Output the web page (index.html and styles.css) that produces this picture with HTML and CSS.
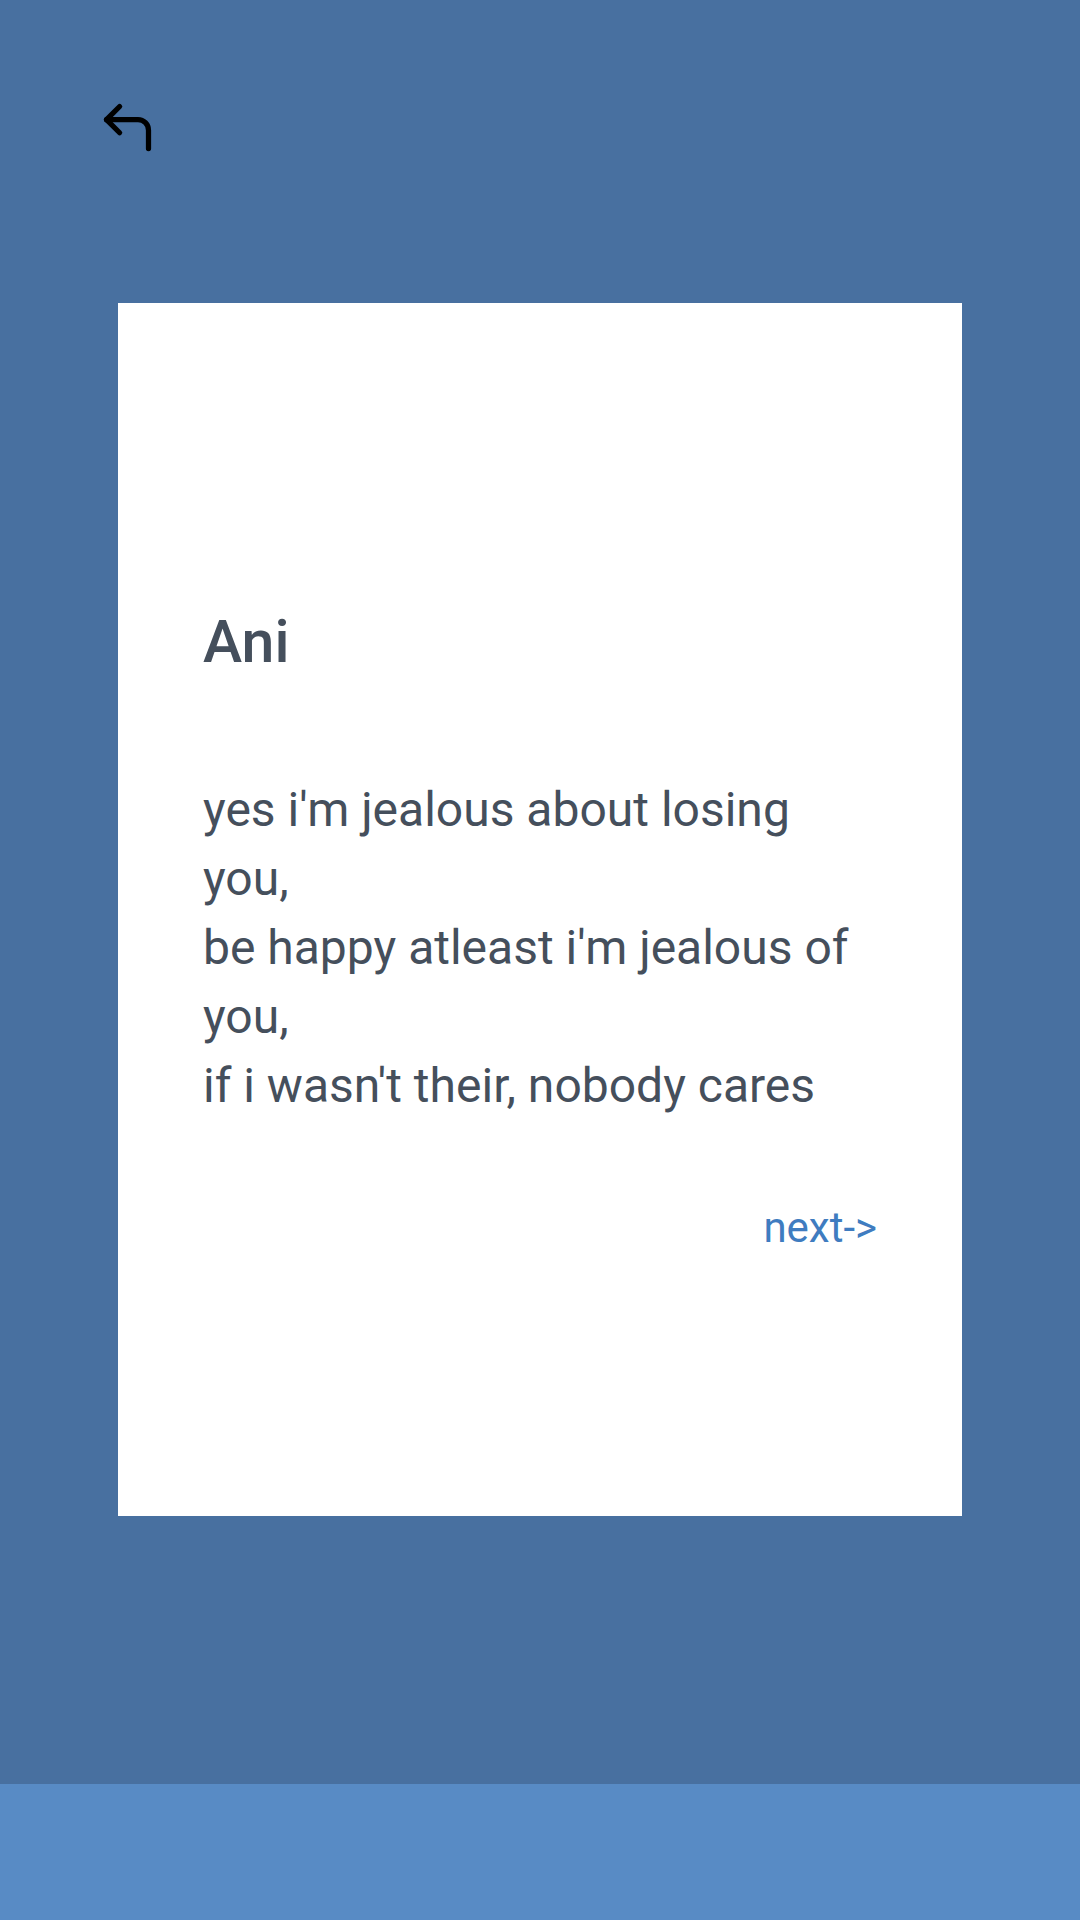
FILE: index.html
```html
<!DOCTYPE html>
<html>
<head>
<meta charset="utf-8">
<link rel="stylesheet" href="styles.css">
</head>
<body>
<div class="screen">
  <header class="topbar">
    <svg class="back" viewBox="0 0 24 24" width="63" height="63" fill="none" stroke="#000" stroke-width="2" stroke-linecap="round" stroke-linejoin="round">
      <polyline points="9 14 4 9 9 4"></polyline>
      <path d="M20 20v-7a4 4 0 0 0-4-4H4"></path>
    </svg>
  </header>
  <main class="content">
    <section class="card">
      <h1 class="title">Ani</h1>
      <p class="poem">yes i'm jealous about losing you,<br>be happy atleast i'm jealous of you,<br>if i wasn't their, nobody cares</p>
      <div class="actions"><a class="next" href="#">next-&gt;</a></div>
    </section>
  </main>
  <footer class="bottombar"></footer>
</div>
</body>
</html>
```

FILE: styles.css
```css
html, body {
  margin: 0;
  padding: 0;
}
body {
  font-family: Roboto, "Noto Sans", sans-serif;
  background: #4870a0;
}
.screen {
  width: 1080px;
  height: 1920px;
  display: flex;
  flex-direction: column;
  background: #4870a0;
}
.topbar {
  height: 303px;
  padding: 96px 0 0 96px;
  box-sizing: border-box;
}
.back {
  display: block;
}
.content {
  flex: 1;
  padding: 0 118px;
}
.card {
  background: #ffffff;
  height: 1213px;
  box-sizing: border-box;
  padding: 305px 85px 0 85px;
}
.title {
  margin: 0;
  font-size: 59px;
  line-height: 68px;
  font-weight: 500;
  color: #454f5c;
}
.poem {
  margin: 99px 0 0 0;
  font-size: 48px;
  line-height: 69px;
  font-weight: 400;
  color: #454f5c;
}
.actions {
  margin-top: 83px;
  display: flex;
  justify-content: flex-end;
}
.next {
  font-size: 42px;
  line-height: 50px;
  color: #3f7cc0;
  text-decoration: none;
}
.bottombar {
  height: 136px;
  background: #588bc5;
}
```
